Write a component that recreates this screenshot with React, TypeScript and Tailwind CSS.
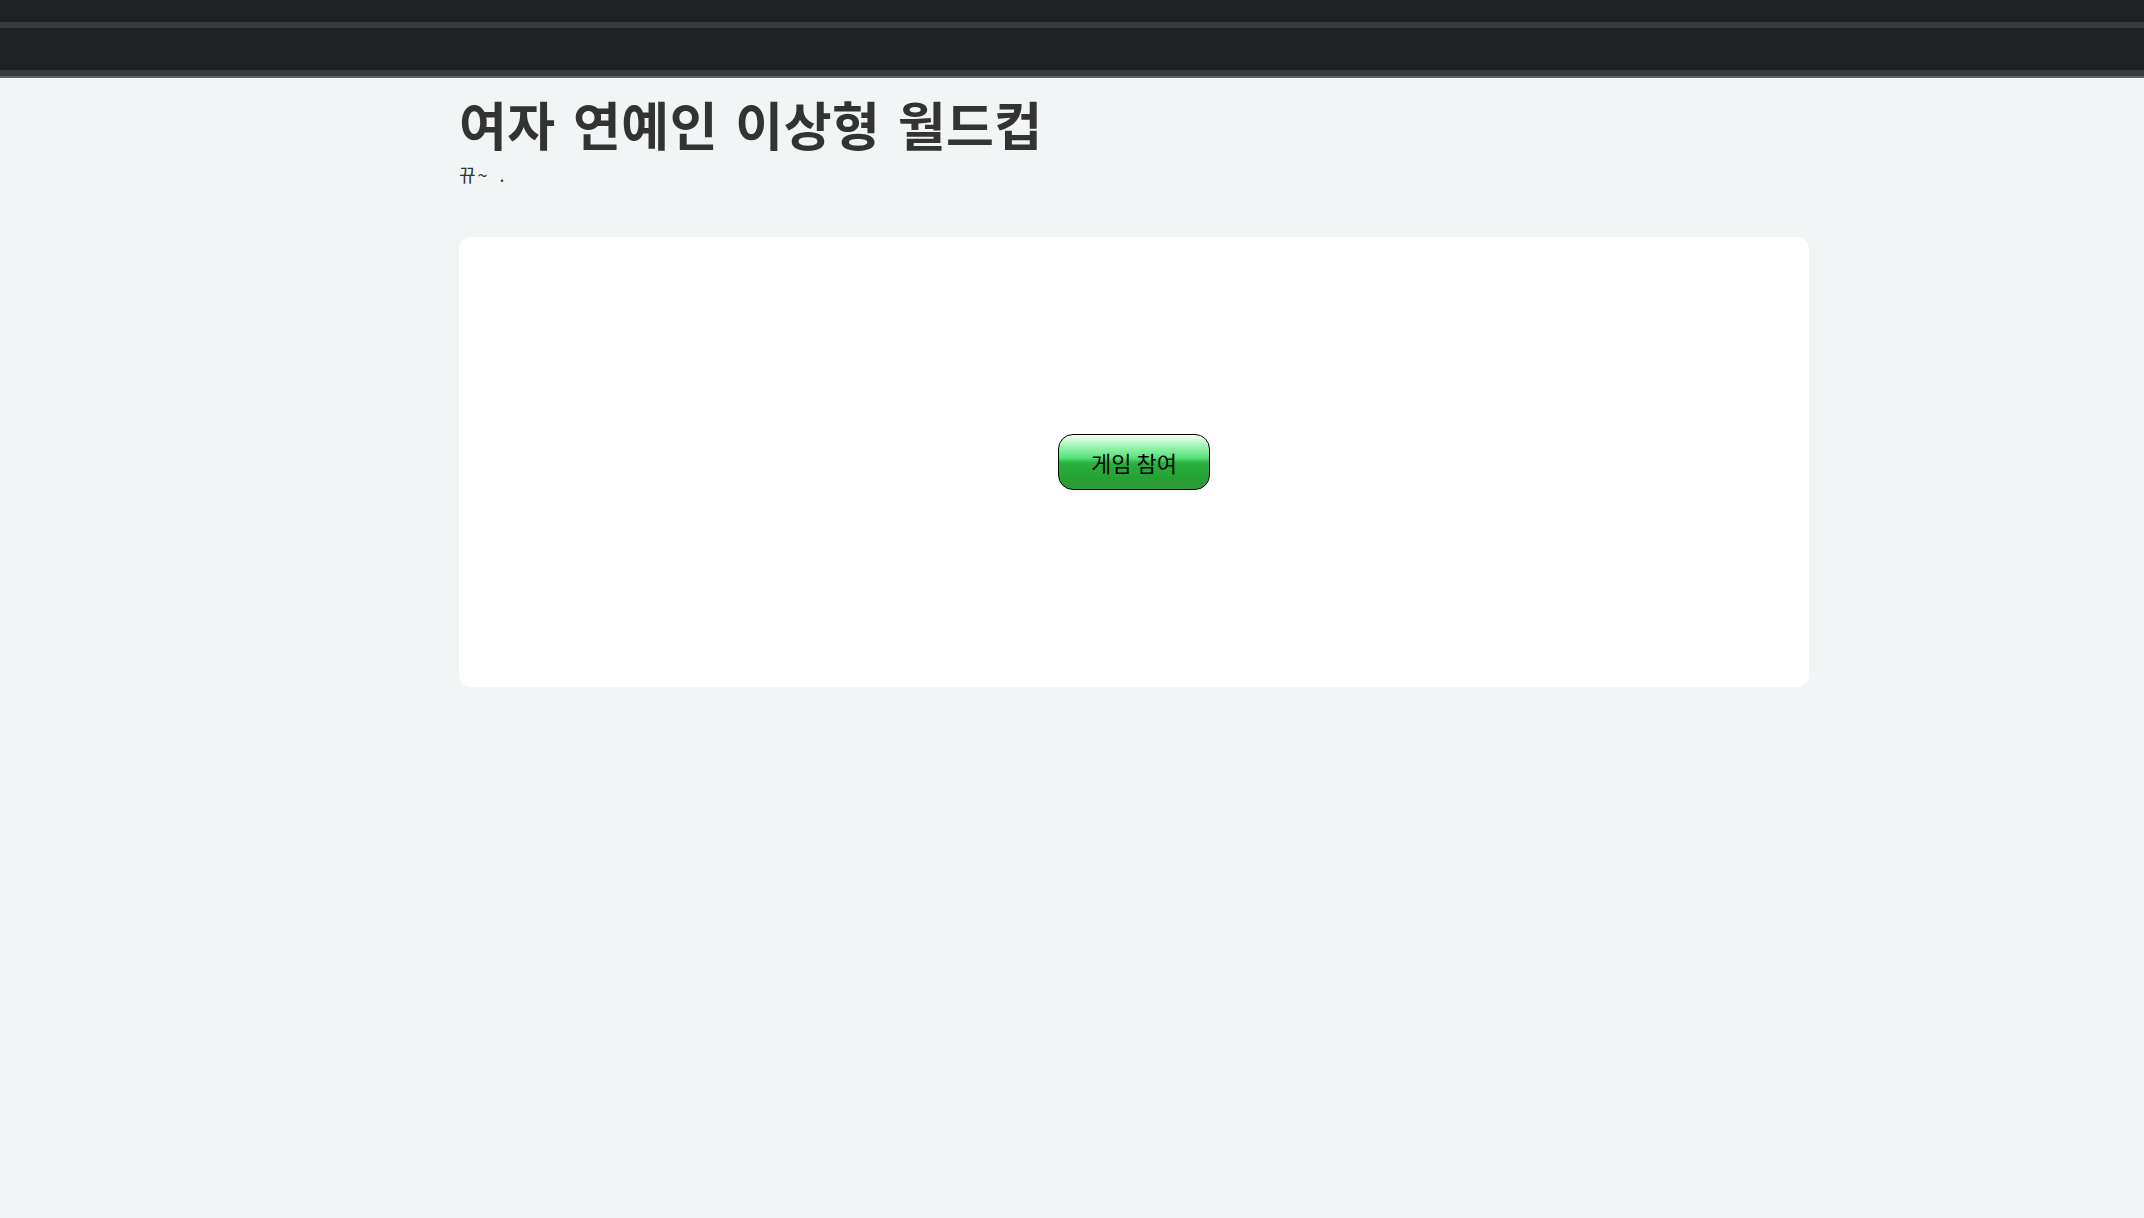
export default function App() {
  return (
    <div className="min-h-[1218px] bg-[#f2f5f6] font-['Noto_Sans_CJK_KR','Noto_Sans',sans-serif] text-[#333]">
      {/* top bar */}
      <div className="h-[78px] bg-[#202125] pt-[22px] border-b-2 border-[#5f6064]">
        <div className="h-[6px] bg-[#38393d]" />
        <div className="h-[42px]" />
        <div className="h-[6px] bg-[#38393d]" />
      </div>

      <div className="ml-[459px] w-[1350px]">
        <h1 className="mt-[14px] text-[52px] font-bold leading-[64px] tracking-[0.5px] [word-spacing:5px] text-[#333]">
          여자 연예인 이상형 월드컵
        </h1>
        <p className="mt-[6px] text-[18px] leading-[24px] tracking-[2px] [word-spacing:4px] text-[#333]">뀨~ .</p>

        <div className="mt-[51px] h-[450px] rounded-xl bg-white flex items-center justify-center">
          <button className="w-[152px] h-[56px] rounded-[15px] border border-black bg-[linear-gradient(to_bottom,#f4fff4_0%,#9af3ad_22%,#55e27c_42%,#26b23c_52%,#27a033_80%,#2c9a34_100%)] text-[22px] font-normal text-black">
            게임 참여
          </button>
        </div>
      </div>
    </div>
  );
}
